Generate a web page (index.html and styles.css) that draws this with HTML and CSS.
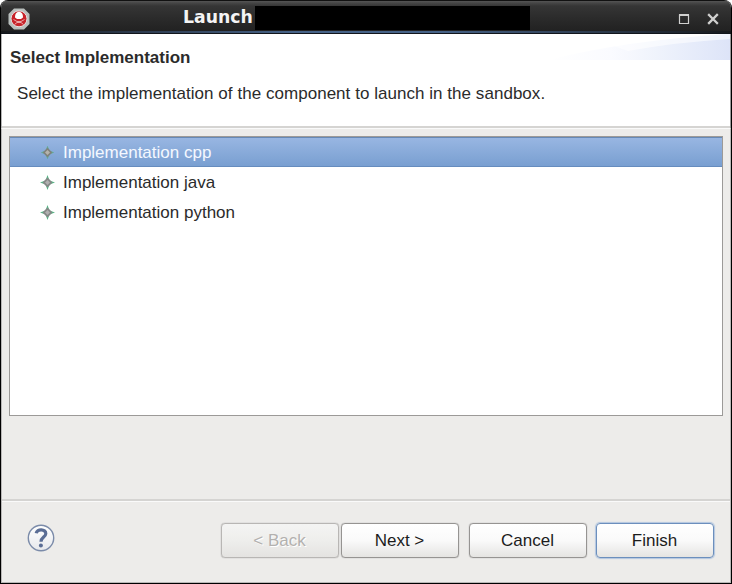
FILE: index.html
```html
<!DOCTYPE html>
<html lang="en">
<head>
<meta charset="utf-8">
<title>Launch</title>
<link rel="stylesheet" href="styles.css">
</head>
<body>
<div class="window">
  <div class="titlebar">
    <svg class="app-icon" width="22" height="22" viewBox="0 0 22 22">
      <path d="M6 .5h10L21.500 6v10L16 21.500H6L.5 16V6z" fill="#b9bfbd"/>
      <circle cx="11" cy="10.800" r="8" fill="#c8232a" stroke="#e6e2e2" stroke-width="1"/>
      <path d="M7 9.500C7 6 8.500 3.800 11 3.800s4 2.200 4 5.700L13 11H9z" fill="#fff"/>
      <path d="M5.500 11.500l3.500 2h4l3.500-2M6.500 16.500l2.500-2h4l2.500 2" fill="none" stroke="#eaa5a7" stroke-width="1"/>
    </svg>
    <span class="title">Launch</span><span class="redacted"></span>
    <div class="controls">
      <svg width="12" height="12" viewBox="0 0 12 12"><path d="M1.500 2h9v8.500h-9z" fill="none" stroke="#d0d0cf" stroke-width="1.200"/><path d="M1 2h10" stroke="#d0d0cf" stroke-width="2"/></svg>
      <svg width="12" height="12" viewBox="0 0 12 12"><path d="M2 2l8 8M10 2l-8 8" stroke="#d0d0cf" stroke-width="2.300" stroke-linecap="square"/></svg>
    </div>
  </div>
  <div class="header">
    <svg class="swoosh" width="182" height="26" viewBox="0 0 182 26">
      <defs>
        <linearGradient id="sw"><stop offset="0" stop-color="#fff"/><stop offset=".35" stop-color="#fafbff"/><stop offset=".6" stop-color="#eff3fc"/><stop offset="1" stop-color="#dde4f8"/></linearGradient>
      </defs>
      <path d="M0 26Q80 6 182 0V26z" fill="url(#sw)"/>
      <path d="M60 10Q120 2 182 0V5Q130 8 80 17z" fill="#fff" opacity=".55"/>
    </svg>
    <h1>Select Implementation</h1>
    <p>Select the implementation of the component to launch in the sandbox.</p>
  </div>
  <div class="content">
    <ul class="list">
      <li class="selected"><svg class="diamond" width="15" height="15" viewBox="0 0 15 15"><path d="M7.500 .8l2 4.700 4.700 2-4.700 2-2 4.700-2-4.700-4.700-2 4.700-2z" fill="#62aa91"/><path d="M7.500 2.800l4.700 4.700-4.700 4.700-4.700-4.700z" fill="#80827c"/><path d="M7.500 5l2.500 2.500-2.500 2.500-2.500-2.500z" fill="#b5b3ac"/></svg><span>Implementation cpp</span></li>
      <li><svg class="diamond" width="15" height="15" viewBox="0 0 15 15"><path d="M7.500 0l2 5.500 5.500 2-5.500 2-2 5.500-2-5.500-5.500-2 5.500-2z" fill="#56b686"/><path d="M7.500 2.500l5 5-5 5-5-5z" fill="#858987"/><path d="M7.500 5l2.500 2.500-2.500 2.500-2.500-2.500z" fill="#b0b0b0"/></svg><span>Implementation java</span></li>
      <li><svg class="diamond" width="15" height="15" viewBox="0 0 15 15"><path d="M7.500 0l2 5.500 5.500 2-5.500 2-2 5.500-2-5.500-5.500-2 5.500-2z" fill="#56b686"/><path d="M7.500 2.500l5 5-5 5-5-5z" fill="#858987"/><path d="M7.500 5l2.500 2.500-2.500 2.500-2.500-2.500z" fill="#b0b0b0"/></svg><span>Implementation python</span></li>
    </ul>
  </div>
  <div class="footer">
    <svg class="help" width="28" height="28" viewBox="0 0 28 28">
      <defs><linearGradient id="hg" x2="0" y2="1"><stop offset="0" stop-color="#fff"/><stop offset="1" stop-color="#e6e8ec"/></linearGradient></defs>
      <circle cx="14" cy="14" r="12.700" fill="url(#hg)" stroke="#7b8ba9" stroke-width="1.400"/>
      <path d="M9.200 9.300C9.800 4.600 19 4.600 18.800 9.800C18.600 13.200 14 13.200 14 17.800" fill="none" stroke="#5a6d95" stroke-width="3.200"/>
      <circle cx="13.900" cy="21.600" r="2" fill="#5a6d95"/>
    </svg>
    <div class="buttons">
      <button class="btn back" disabled>&lt; Back</button>
      <button class="btn next">Next &gt;</button>
      <button class="btn cancel">Cancel</button>
      <button class="btn finish">Finish</button>
    </div>
  </div>
</div>
</body>
</html>
```
FILE: styles.css
```css
* { box-sizing: border-box; }
body { margin: 0; background: #fff; font: 17px/20px "Liberation Sans", Arial, sans-serif; color: #2b2b2b; }
.window { width: 732px; height: 584px; display: flex; flex-direction: column; background: #edecea; border: 1px solid #000; border-top: 0; border-radius: 8px 8px 0 0; overflow: hidden; }
.titlebar { height: 34px; flex: none; display: flex; align-items: center; padding: 1px 12px 0 7px; border-top: 1px solid #111; border-bottom: 1px solid #11151b; background: linear-gradient(90deg, #17191c, #466287 40%, #466287 60%, #17191c) 0 100% / 100% 2px no-repeat, linear-gradient(#555 0, #464646 2px, #353535 5px, #2b2b2b 17px, #202020 100%); }
.app-icon { display: block; flex: none; margin-top: 2px; }
.title { margin: -2px 0 0 153px; width: 71px; font: bold 17.300px/24px "DejaVu Sans", sans-serif; color: #f4f4f4; white-space: nowrap; }
.redacted { width: 275px; height: 24px; margin-left: 1px; background: #000; }
.controls { margin: 2px 0 0 auto; display: flex; gap: 17px; }
.controls svg { display: block; }
.header { height: 95px; flex: none; position: relative; padding: 14px 0 0 8px; background: #fff; border-bottom: 1px solid #fafafa; border-left: 1px solid #b5b5b5; border-right: 1px solid #999; box-shadow: inset 0 -2px #d5d4d2; }
.swoosh { position: absolute; right: 0; top: 0; }
h1 { margin: 0; font-size: 17px; line-height: 20px; font-weight: bold; }
p { margin: 16px 0 0 7px; white-space: nowrap; letter-spacing: .04px; }
.content { height: 370px; flex: none; padding: 7px 7px 0; border: solid #b9b8b7; border-width: 0 1px; }
.list { list-style: none; margin: 0; padding: 0; height: 280px; border: 1px solid #9c9a98; background: #fff; }
.list li { height: 30px; display: flex; align-items: center; padding-left: 30px; }
.list li span { padding-top: 1px; }
.list .selected { color: #f4f8ff; border-top: 1px solid #6789b5; border-bottom: 1px solid #668cbe; background: linear-gradient(#98b6e2, #799fd1); }
.diamond { margin-right: 8px; flex: none; }
.footer { flex: 1; display: flex; align-items: flex-start; padding: 25px 16px 0 25px; border: solid #b9b8b7; border-width: 0 1px 1px; box-shadow: inset 0 2px #d5d4d2, inset 0 3px #fafafa; }
.buttons { margin-left: auto; display: flex; }
.btn { width: 118px; height: 35px; margin: -1px 0 0; padding: 1px 1px 0 0; border: 1px solid #969492; border-radius: 4px; background: linear-gradient(#fff, #fafafa 50%, #e5e4e2); box-shadow: 0 0 1px 0 #888; font: inherit; color: #1c1c1c; }
.back { margin-right: 2px; border-color: #b8b6b4; background: linear-gradient(#f4f4f3, #eeeeec 50%, #e4e3e1); color: #b3b1af; text-shadow: 1px 1px #fff; }
.next { margin-right: 10px; }
.cancel { margin-right: 9px; }
.finish { border-color: #6c8fbd; box-shadow: 0 0 1px 1px #b2c6df; }
```
